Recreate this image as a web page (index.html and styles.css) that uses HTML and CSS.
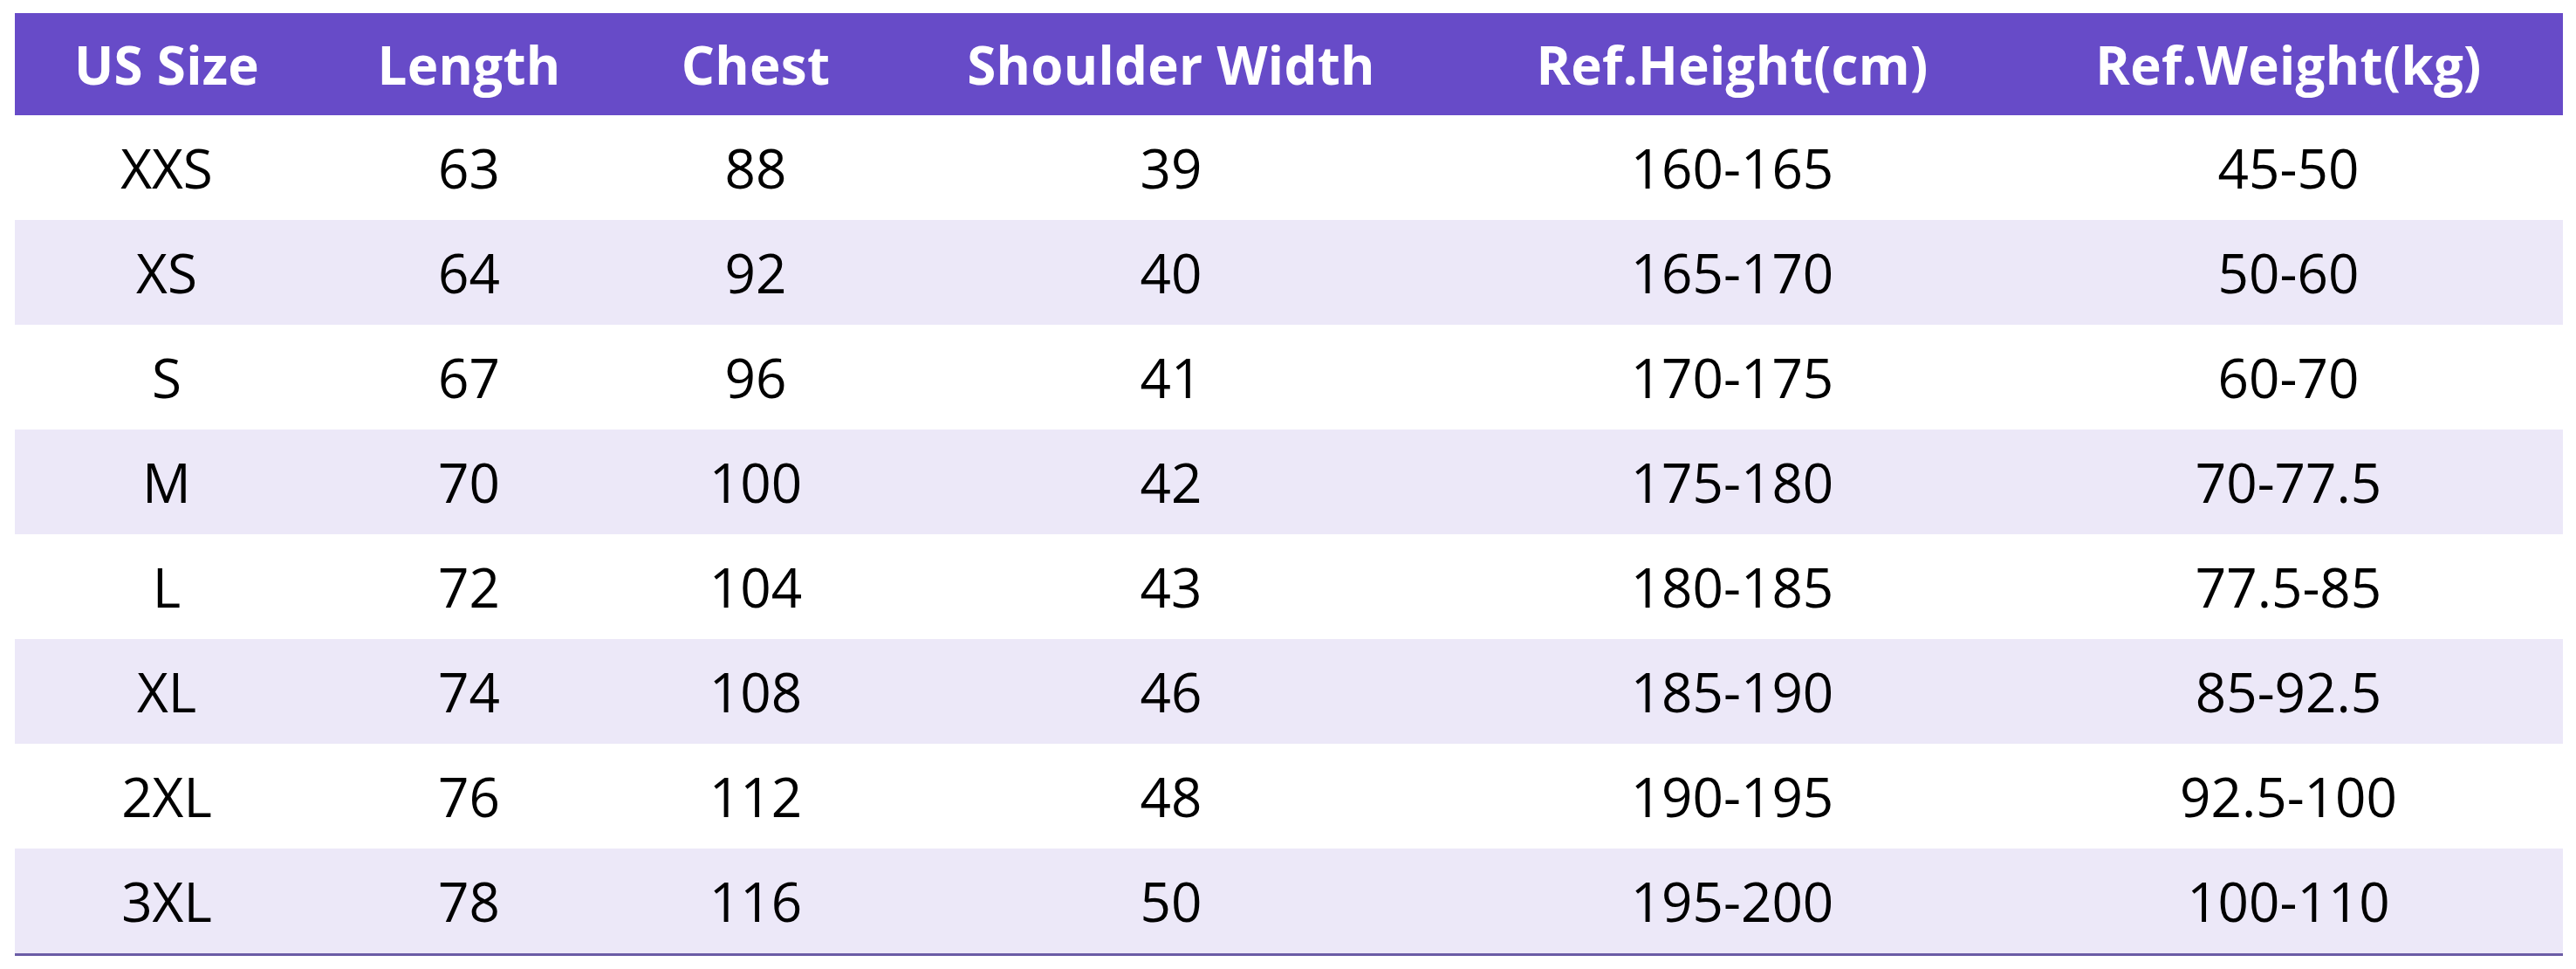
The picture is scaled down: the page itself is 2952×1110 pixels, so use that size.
FILE: index.html
```html
<!DOCTYPE html>
<html lang="en">
<head>
<meta charset="utf-8">
<title>Size Chart</title>
<link rel="stylesheet" href="styles.css">
</head>
<body>
<table class="size-table">
  <colgroup>
    <col class="c-size">
    <col class="c-length">
    <col class="c-chest">
    <col class="c-shoulder">
    <col class="c-height">
    <col class="c-weight">
  </colgroup>
  <thead>
    <tr>
      <th>US Size</th>
      <th>Length</th>
      <th>Chest</th>
      <th>Shoulder Width</th>
      <th>Ref.Height(cm)</th>
      <th>Ref.Weight(kg)</th>
    </tr>
  </thead>
  <tbody>
    <tr><td>XXS</td><td>63</td><td>88</td><td>39</td><td>160-165</td><td>45-50</td></tr>
    <tr><td>XS</td><td>64</td><td>92</td><td>40</td><td>165-170</td><td>50-60</td></tr>
    <tr><td>S</td><td>67</td><td>96</td><td>41</td><td>170-175</td><td>60-70</td></tr>
    <tr><td>M</td><td>70</td><td>100</td><td>42</td><td>175-180</td><td>70-77.5</td></tr>
    <tr><td>L</td><td>72</td><td>104</td><td>43</td><td>180-185</td><td>77.5-85</td></tr>
    <tr><td>XL</td><td>74</td><td>108</td><td>46</td><td>185-190</td><td>85-92.5</td></tr>
    <tr><td>2XL</td><td>76</td><td>112</td><td>48</td><td>190-195</td><td>92.5-100</td></tr>
    <tr><td>3XL</td><td>78</td><td>116</td><td>50</td><td>195-200</td><td>100-110</td></tr>
  </tbody>
</table>
</body>
</html>
```

FILE: styles.css
```css
html, body {
  margin: 0;
  padding: 0;
  background: #ffffff;
}

body {
  padding: 15px 15px 0 17px;
  font-family: "Open Sans", "Noto Sans", "Liberation Sans", sans-serif;
}

.size-table {
  width: 2920px;
  table-layout: fixed;
  border-collapse: collapse;
  border-spacing: 0;
  border-bottom: 3px solid #6b5ca6;
}

.c-size { width: 348px; }
.c-length { width: 345px; }
.c-chest { width: 312px; }
.c-shoulder { width: 640px; }
.c-height { width: 646px; }
.c-weight { width: 629px; }

.size-table th {
  height: 117px;
  padding: 0;
  background: #674bc8;
  color: #ffffff;
  font-weight: 700;
  font-size: 60px;
  letter-spacing: 0.3px;
  text-align: center;
  vertical-align: middle;
  line-height: 1;
}

.size-table td {
  height: 120px;
  padding: 0;
  color: #000000;
  font-weight: 400;
  font-size: 62px;
  text-align: center;
  vertical-align: middle;
  line-height: 1;
}

.size-table tbody tr:nth-child(even) td {
  background: #ece8f8;
}
```
